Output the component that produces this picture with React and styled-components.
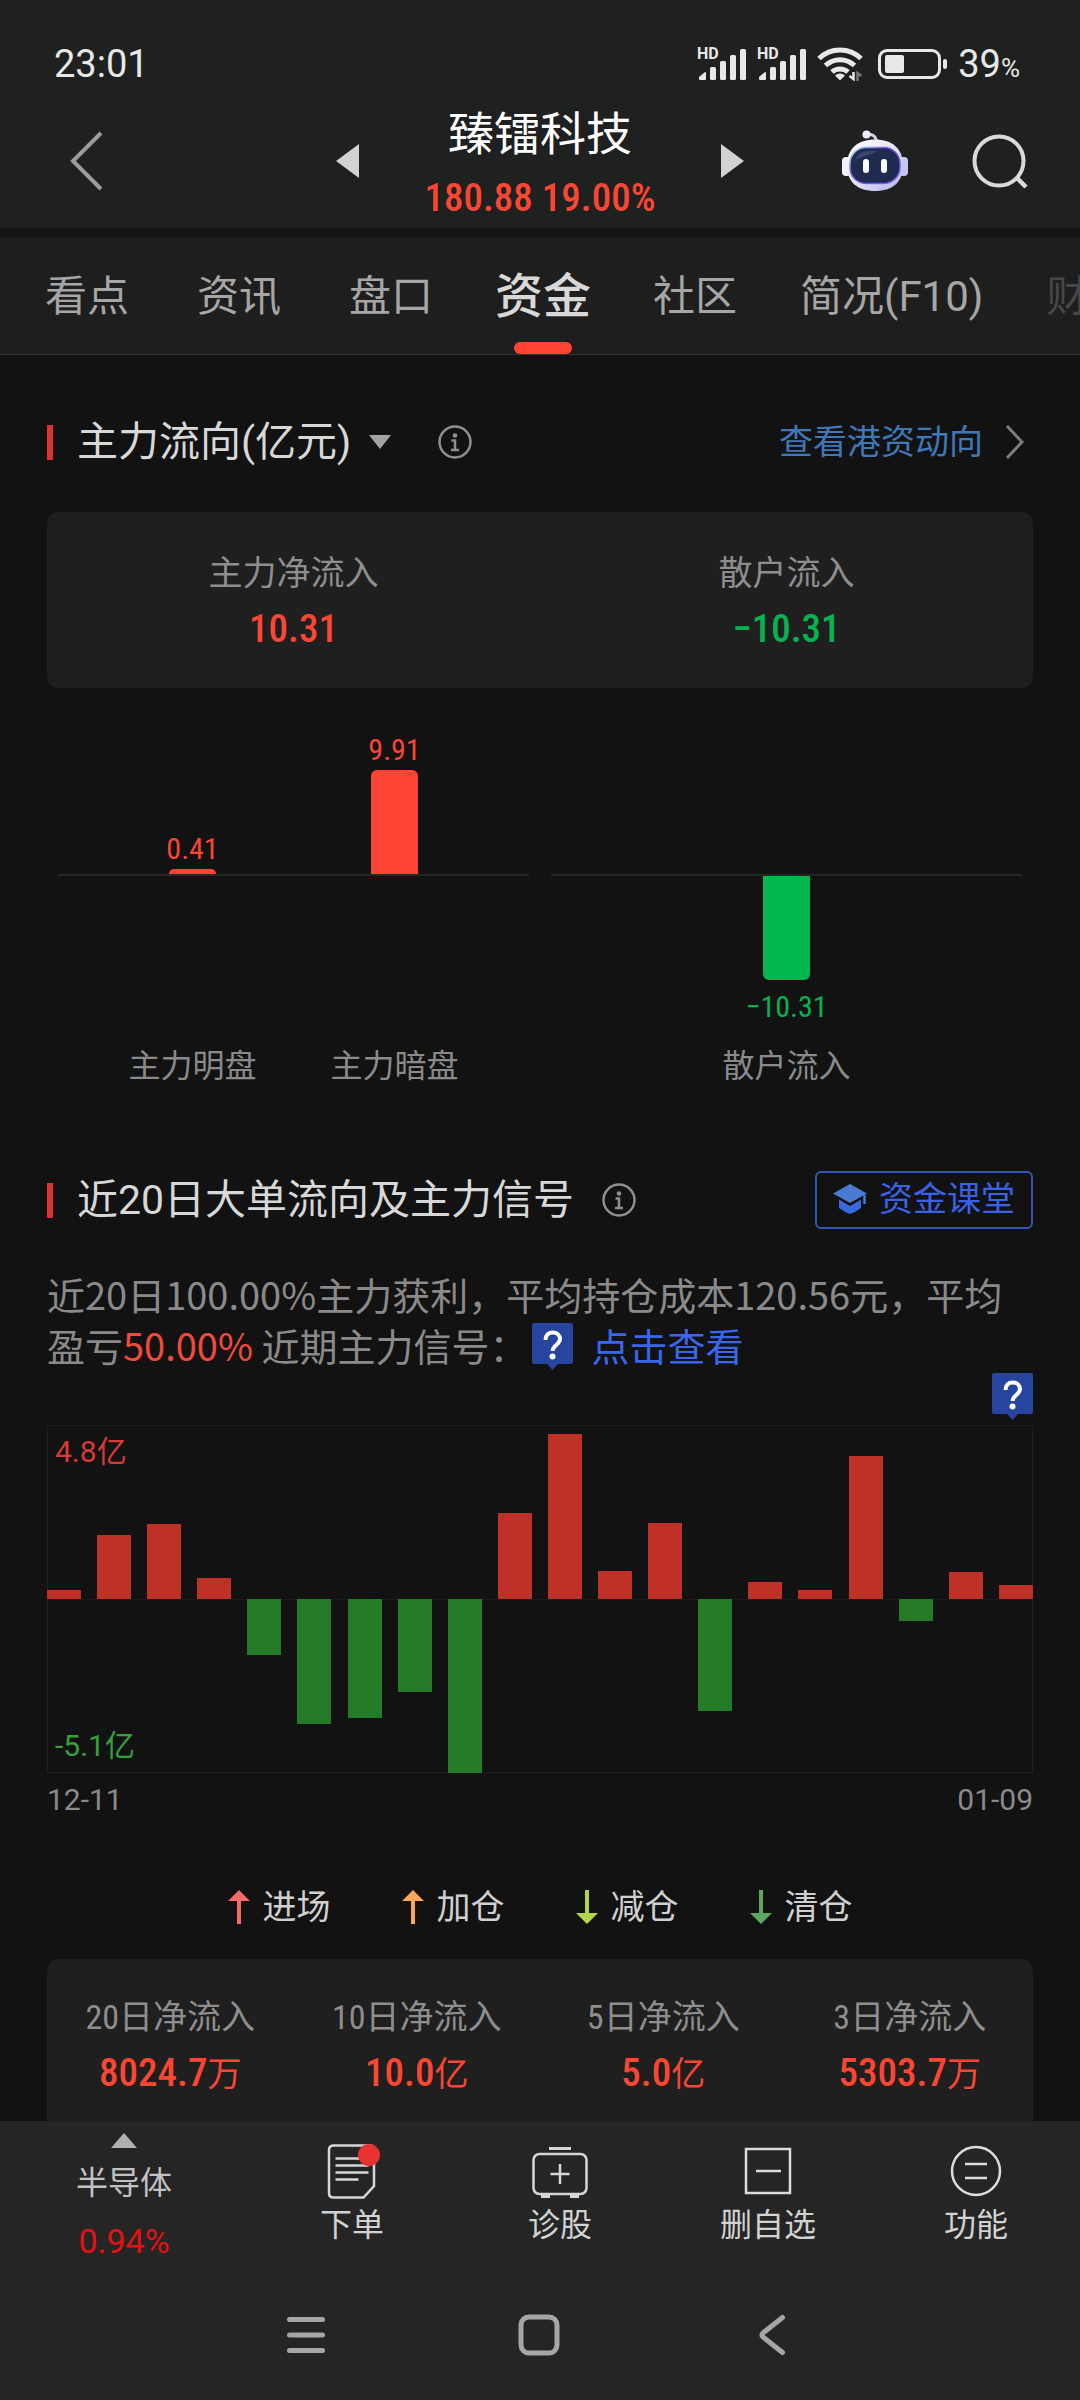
import React from "react";
import styled, { createGlobalStyle } from "styled-components";

const CJK = `"Noto Sans CJK SC", sans-serif`;
const NARROW = `"Roboto Condensed", "Liberation Sans Narrow", Roboto, ${CJK}`;
const RED = "#fa4633";
const GREEN = "#07b350";

const GlobalStyle = createGlobalStyle`
  *, *::before, *::after { box-sizing: border-box; }
  body {
    margin: 0;
    background: #121212;
    color: #d4d4d4;
    font-family: Roboto, ${CJK};
  }
  button { margin: 0; padding: 0; border: 0; background: none; color: inherit; font: inherit; cursor: pointer; }
  h1, h2, p, dl, dd, dt { margin: 0; font-weight: 400; }
  a { text-decoration: none; }
  svg { display: block; flex: none; }
`;

const Screen = styled.div`
  display: flex;
  flex-direction: column;
  height: 100vh;
  overflow: hidden;
`;

/* ---------- top ---------- */

const Top = styled.header`
  flex: none;
  background: #1f2120;
  border-bottom: 9px solid #151515;
`;

const StatusBar = styled.div`
  display: flex;
  align-items: center;
  justify-content: space-between;
  height: 94px;
  padding: 33px 60px 0 54px;
  color: #e8e8e8;
  font-size: 38px;
  line-height: 40px;
`;

const StatusIcons = styled.div`
  display: flex;
  align-items: center;
  gap: 10px;
`;

const Percent = styled.small`
  font-size: 26px;
  line-height: 26px;
`;

const TitleBar = styled.div`
  display: grid;
  grid-template-columns: 1fr auto 1fr;
  align-items: center;
  height: 134px;
  padding: 0 52px;
`;

const BackButton = styled.button`
  justify-self: start;
  margin-left: 18px;
`;

const Stock = styled.div`
  display: flex;
  align-items: center;
  justify-content: space-between;
  width: 408px;
`;

const StockText = styled.div`
  display: flex;
  flex-direction: column;
  align-items: center;
  gap: 13px;
  padding-top: 2px;
`;

const StockName = styled.h1`
  color: #fff;
  font-family: ${CJK};
  font-size: 46px;
  line-height: 58px;
`;

const Num = styled.span`
  font-family: ${NARROW};
  font-size: ${(p) => p.$size || 39}px;
  font-weight: ${(p) => (p.$size ? 400 : 500)};
`;

const Quote = styled.div`
  color: ${RED};
  font-size: 39px;
  line-height: 52px;
  white-space: nowrap;
`;

const Actions = styled.div`
  display: flex;
  align-items: center;
  justify-content: flex-end;
  gap: 64px;
`;

const Tabs = styled.nav`
  display: flex;
  flex: none;
  height: 118px;
  padding-left: 11px;
  overflow: hidden;
  background: #1e1e1e;
  border-bottom: 1px solid #333;
`;

const Tab = styled.button`
  display: flex;
  flex: none;
  flex-direction: column;
  align-items: center;
  justify-content: space-between;
  min-width: 152px;
  padding: 30px 29px 0;
  color: ${(p) => (p.$active ? "#d8d8d8" : "#a6a6a6")};
  font-size: ${(p) => (p.$active ? 48 : 42)}px;
  font-weight: ${(p) => (p.$active ? 500 : 400)};
  line-height: 60px;
  white-space: nowrap;
  opacity: ${(p) => (p.$faded ? 0.3 : 1)};

  ${(p) => p.$active && "padding-left: 0; padding-right: 0;"}

  &::after {
    content: "";
    width: 58px;
    height: 12px;
    border-radius: 6px;
    background: ${(p) => (p.$active ? "#ff4433" : "transparent")};
  }
`;

/* ---------- content ---------- */

const Content = styled.main`
  flex: 1;
  min-height: 0;
  overflow-y: auto;
  scrollbar-width: none;
  padding: 58px 47px 0;
`;

const SectionHead = styled.div`
  display: flex;
  align-items: center;
  height: 58px;
`;

const SectionTitle = styled.h2`
  display: flex;
  align-items: center;
  gap: 24px;
  color: #d8d8d8;
  font-size: 41px;
  line-height: 50px;
  white-space: nowrap;

  &::before {
    content: "";
    width: 6px;
    height: 35px;
    background: #e03131;
  }
`;

const CaretButton = styled.button`
  margin-left: 18px;
`;

const InfoButton = styled.button`
  margin-left: ${(p) => p.$gap}px;
`;

const MoreLink = styled.a`
  display: flex;
  align-items: center;
  gap: 22px;
  margin-left: auto;
  padding-right: 8px;
  color: #3f78b8;
  font-size: 34px;
  line-height: 46px;
`;

const LessonButton = styled.button`
  display: flex;
  align-items: center;
  justify-content: center;
  gap: 12px;
  width: 218px;
  height: 58px;
  margin-left: auto;
  padding-bottom: 2px;
  border: 2px solid #3557b5;
  border-radius: 6px;
  color: #3a62e6;
  font-size: 34px;
  line-height: 46px;
`;

const Card = styled.dl`
  display: grid;
  grid-template-columns: repeat(${(p) => p.$cols}, 1fr);
  margin-top: ${(p) => p.$top}px;
  padding: ${(p) => p.$pad}px 0 35px;
  border-radius: 12px;
  background: #1f1f1f;
`;

const Stat = styled.div`
  display: flex;
  flex-direction: column;
  align-items: center;
  gap: 10px;
  line-height: 46px;
  white-space: nowrap;
`;

const StatLabel = styled.dt`
  color: #8e8e8e;
  font-family: ${NARROW};
  font-size: 34px;
`;

const StatValue = styled.dd`
  color: ${(p) => (p.$down ? GREEN : RED)};
  font-size: 34px;
`;

const FlowChart = styled.div`
  display: grid;
  grid-template-columns: 1fr 1fr;
  gap: 22px;
  padding: 0 11px;
`;

const FlowHalf = styled.div`
  display: flex;
  justify-content: center;
  background: linear-gradient(#262626, #262626) 0 186px / 100% 2px no-repeat;
`;

const FlowColumn = styled.div`
  display: grid;
  grid-template-rows: 186px 172px 40px;
  justify-items: center;
  width: 202px;
`;

const FlowUp = styled.div`
  display: flex;
  flex-direction: column;
  justify-content: flex-end;
  align-items: center;
  gap: 5px;
  color: ${RED};
  line-height: 30px;
`;

const FlowDown = styled.div`
  display: flex;
  flex-direction: column;
  align-items: center;
  gap: 12px;
  padding-top: 2px;
  color: ${GREEN};
  line-height: 30px;
`;

const FlowBar = styled.div`
  width: 47px;
  border-radius: ${(p) => (p.$down ? "0 0 6px 6px" : "6px 6px 0 0")};
  background: ${(p) => (p.$down ? "#02b84f" : "#ff4433")};
`;

const FlowName = styled.div`
  color: #8a8a8a;
  font-size: 32px;
  line-height: 40px;
`;

const SecondHead = styled(SectionHead)`
  margin-top: 85px;
`;

const Summary = styled.p`
  margin-top: 39px;
  color: #8a8a8a;
  font-family: ${CJK};
  font-size: 38px;
  line-height: 51px;
`;

const Hot = styled.span`
  color: #f04a38;
`;

const SignalLink = styled.a`
  color: #3a66ee;

  svg {
    display: inline-block;
    margin: 0 18px 0 5px;
    vertical-align: -9px;
  }
`;

const MarkerRow = styled.div`
  display: flex;
  justify-content: flex-end;
  margin-top: 3px;
`;

const DayChart = styled.div`
  position: relative;
  display: flex;
  justify-content: space-between;
  height: 348px;
  margin-top: 5px;
  background: linear-gradient(#1b1b1b, #1b1b1b) 0 50% / 100% 1px no-repeat;
  box-shadow: inset 0 0 0 1px #1f1f1f, inset 0 -1px 0 #292929;
`;

const Day = styled.div`
  display: flex;
  flex-direction: column;
  justify-content: ${(p) => (p.$down ? "flex-start" : "flex-end")};
  width: 34px;
  height: 50%;
  margin-top: ${(p) => (p.$down ? 174 : 0)}px;
`;

const DayBar = styled.div`
  background: ${(p) => (p.$down ? "#247a26" : "#bd3126")};
`;

const ScaleLabel = styled.span`
  position: absolute;
  left: 8px;
  ${(p) => (p.$low ? "bottom: 8px; color: #38a03a;" : "top: 8px; color: #d83a35;")}
  font-size: 30px;
  line-height: 38px;
`;

const Dates = styled.div`
  display: flex;
  justify-content: space-between;
  margin-top: 7px;
  color: #8a8a8a;
  font-size: 30px;
  line-height: 40px;
`;

const Legend = styled.div`
  display: flex;
  justify-content: center;
  gap: 71px;
  margin-top: 64px;
`;

const LegendItem = styled.span`
  display: flex;
  align-items: center;
  gap: 13px;
  color: #d0d0d0;
  font-size: 34px;
  line-height: 46px;
`;

/* ---------- bottom ---------- */

const Bottom = styled.footer`
  flex: none;
  height: 279px;
  background: #252525;
`;

const Toolbar = styled.nav`
  display: grid;
  grid-template-columns: 248fr 208fr 208fr 208fr 208fr;
  height: 149px;
`;

const Tool = styled.button`
  display: flex;
  flex-direction: column;
  align-items: center;
  gap: 5px;
  padding-top: 21px;
  color: #d2d2d2;
  font-size: 32px;
  line-height: 40px;
`;

const Sector = styled.button`
  display: flex;
  flex-direction: column;
  align-items: center;
  padding-top: 12px;
  color: #c2c2c2;
  font-size: 32px;
  line-height: 40px;
`;

const SectorName = styled.span`
  margin-top: 15px;
`;

const SectorChange = styled.span`
  margin-top: 18px;
  color: #e21212;
  font-size: 34px;
`;

const SystemNav = styled.div`
  display: flex;
  justify-content: center;
  align-items: center;
  height: 130px;
  padding-right: 2px;
`;

const SystemKey = styled.button`
  display: flex;
  justify-content: center;
  width: 233px;
`;

/* ---------- drawings ---------- */

const Signal = () => (
  <svg width="50" height="44" viewBox="0 -5 50 44" fill="#e8e8e8" aria-hidden="true">
    <text x="0" y="12" fontFamily="Roboto, sans-serif" fontSize="16" fontWeight="700">HD</text>
    <path d="M3 33q-1 0-1-1v-2l6-5q1 0 1 1v6q0 1-1 1z" />
    <rect x="13" y="20" width="6" height="13" rx="1.5" />
    <rect x="23" y="14" width="6" height="19" rx="1.5" />
    <rect x="33" y="8" width="6" height="25" rx="1.5" />
    <rect x="43" y="2" width="6" height="31" rx="1.5" />
  </svg>
);

const Wifi = () => (
  <svg width="51" height="36" viewBox="0 0 51 36" fill="none" stroke="#e8e8e8" strokeWidth="5" aria-hidden="true">
    <path d="M2 12.500a30 30 0 0 1 42 0" />
    <path d="M8.500 19.500a21 21 0 0 1 29 0" />
    <path d="M15 26a12 12 0 0 1 16 0" />
    <path d="M18 29.500q5-4 10 0l-5 5z" fill="#e8e8e8" stroke="none" />
    <path d="M36.500 26v7l-4-3" strokeWidth="2.500" />
    <path d="M40.500 35v-8l4 3" stroke="#777" strokeWidth="2.500" />
  </svg>
);

const Battery = () => (
  <svg width="70" height="32" viewBox="0 0 70 32" aria-hidden="true">
    <rect x="1.500" y="2.500" width="60" height="27" rx="7.500" fill="none" stroke="#e8e8e8" strokeWidth="3" />
    <rect x="7" y="7" width="19" height="18" rx="2" fill="#e8e8e8" />
    <rect x="65" y="11" width="4" height="10" rx="2" fill="#e8e8e8" />
  </svg>
);

const BackIcon = () => (
  <svg width="34" height="60" viewBox="0 0 34 60" fill="none" stroke="#9b9b9b" strokeWidth="4">
    <path d="M31 2 3 30l28 28" />
  </svg>
);

const Triangle = ({ d, w, h, fill }) => (
  <svg width={w} height={h} viewBox={`0 0 ${w} ${h}`} fill={fill}>
    <path d={d} />
  </svg>
);

const Robot = () => (
  <svg width="66" height="62" viewBox="0 0 66 62">
    <defs>
      <linearGradient id="shell" x1="0" y1="0" x2="1" y2="1">
        <stop offset="0" stopColor="#ffffff" />
        <stop offset="0.5" stopColor="#e6e2f8" />
        <stop offset="1" stopColor="#b3b1e6" />
      </linearGradient>
      <linearGradient id="rim" x1="0" y1="0" x2="1" y2="1">
        <stop offset="0" stopColor="#8ff0f0" />
        <stop offset="0.4" stopColor="#7a4de0" />
        <stop offset="0.75" stopColor="#5b62ec" />
        <stop offset="1" stopColor="#a45be8" />
      </linearGradient>
    </defs>
    <path d="M25 4q10 0 9 9" fill="none" stroke="#d3cdf2" strokeWidth="3" />
    <circle cx="24.500" cy="4.500" r="4" fill="#efecfd" />
    <rect x="0" y="27" width="9" height="19" rx="4" fill="#f3f1ff" />
    <rect x="57" y="27" width="9" height="19" rx="4" fill="#c9c5ee" />
    <path d="M33 9.500c17 0 28 9 28 26S50 61 33 61 5 52.500 5 35.500s11-26 28-26z" fill="url(#shell)" />
    <rect x="8" y="17.500" width="50" height="36" rx="16" fill="#202b52" stroke="url(#rim)" strokeWidth="1.500" />
    <path d="M13 30q3-9 14-9h9q-8 3-23 9z" fill="#3c4770" />
    <rect x="21" y="29" width="6" height="14" rx="3" fill="#fff" />
    <rect x="39" y="29" width="6" height="14" rx="3" fill="#fff" />
  </svg>
);

const SearchIcon = () => (
  <svg width="56" height="56" viewBox="0 0 56 56" fill="none" stroke="#dadada" strokeWidth="4">
    <circle cx="27" cy="28" r="24.500" />
    <path d="m44 44 10 10" strokeWidth="4.500" />
  </svg>
);

const Info = () => (
  <svg width="34" height="34" viewBox="0 0 34 34" fill="none" stroke="#8f8f8f" strokeWidth="2.500">
    <circle cx="17" cy="17" r="15.500" />
    <circle cx="17" cy="10.500" r="2.300" fill="#8f8f8f" stroke="none" />
    <path d="M13.500 15.500H17v9M13 25h8" />
  </svg>
);

const Chevron = () => (
  <svg width="20" height="36" viewBox="0 0 20 36" fill="none" stroke="#7c7c7c" strokeWidth="3">
    <path d="m2 2 15 16L2 34" />
  </svg>
);

const Cap = () => (
  <svg width="34" height="30" viewBox="0 0 34 30">
    <path d="M17 0 34 9.500 17 19 0 9.500z" fill="#4b7ad2" />
    <path d="M31.500 11v9" stroke="#4b7ad2" strokeWidth="2.500" />
    <path d="M6 15.500 17 22l11-6.500V24q-5 4-11 6-6-2-11-6z" fill="#3a68de" />
  </svg>
);

const Marker = () => (
  <svg width="41" height="47" viewBox="0 0 41 47" role="img" aria-label="?">
    <path d="M2 0h37q2 0 2 2v37q0 2-2 2H26l-5.500 6L15 41H2q-2 0-2-2V2q0-2 2-2z" fill="#27449f" />
    <path d="M13.500 17c0-5 3-7.500 7.200-7.500 4.500 0 7.300 2.800 7.300 6.500 0 5.500-7.300 6-7.300 12" fill="none" stroke="#fff" strokeWidth="4" />
    <circle cx="20.500" cy="33.500" r="3" fill="#fff" />
  </svg>
);

const Arrow = ({ color, down }) => (
  <svg width="22" height="34" viewBox="0 0 22 34" fill={color}>
    {down ? <path d="M9 0h4v23h9L11 34 0 23h9z" /> : <path d="M9 34h4V11h9L11 0 0 11h9z" />}
  </svg>
);

const OrderIcon = () => (
  <svg width="56" height="58" viewBox="0 0 56 58" fill="none" stroke="#d6d6d6" strokeWidth="2.500">
    <path d="M9.500 3.500H46q4 0 4 4V44L39.500 55.500h-30Q5 55.500 5 51V8q0-4.500 4.500-4.500z" />
    <path d="M11.500 16.500h33M11.500 23.500h33M11.500 30.500h33M11.500 37.500h23" />
    <circle cx="45" cy="13" r="11" fill="#e83232" stroke="none" />
  </svg>
);

const DiagnoseIcon = () => (
  <svg width="56" height="58" viewBox="0 0 56 58" fill="none" stroke="#d6d6d6" strokeWidth="2.500">
    <path d="M17 6.500h22" strokeWidth="3" />
    <rect x="1.500" y="12" width="53" height="40" rx="6" />
    <path d="M28 22v20M18.500 32h19" />
    <path d="M9 54h9M38 54h9" strokeWidth="4" />
  </svg>
);

const RemoveIcon = () => (
  <svg width="56" height="58" viewBox="0 0 56 58" fill="none" stroke="#dcdcdc" strokeWidth="2.500">
    <rect x="6" y="7" width="44" height="44" />
    <path d="M16 29h25" />
  </svg>
);

const MoreIcon = () => (
  <svg width="56" height="58" viewBox="0 0 56 58" fill="none" stroke="#dcdcdc" strokeWidth="2.500">
    <circle cx="28" cy="29" r="24" />
    <path d="M17 22h22M17 36h22" />
  </svg>
);

/* ---------- data ---------- */

const TABS = ["看点", "资讯", "盘口", "资金", "社区", "简况(F10)", "财务"];

const DAYS = [
  0.26, 1.88, 2.2, 0.62, -1.64, -3.67, -3.49, -2.73, -5.1, 2.52,
  4.84, 0.82, 2.23, -3.28, 0.5, 0.26, 4.19, -0.64, 0.79, 0.41,
];
const DAY_MAX = 5.1;

const LEGEND = [
  ["进场", "#f46b68", false],
  ["加仓", "#ffa65a", false],
  ["减仓", "#b3d54c", true],
  ["清仓", "#5da75f", true],
];

const NET = [
  ["20日净流入", "8024.7", "万"],
  ["10日净流入", "10.0", "亿"],
  ["5日净流入", "5.0", "亿"],
  ["3日净流入", "5303.7", "万"],
];

const TOOLS = [
  ["下单", OrderIcon],
  ["诊股", DiagnoseIcon],
  ["删自选", RemoveIcon],
  ["功能", MoreIcon],
];

function Flow({ name, label, height, down }) {
  const bar = <FlowBar $down={down} style={{ height }} />;
  return (
    <FlowColumn>
      <FlowUp>{!down && (<><Num $size={30}>{label}</Num>{bar}</>)}</FlowUp>
      <FlowDown>{down && (<>{bar}<Num $size={30}>{label}</Num></>)}</FlowDown>
      <FlowName>{name}</FlowName>
    </FlowColumn>
  );
}

export default function App() {
  return (
    <Screen>
      <GlobalStyle />
      <Top>
        <StatusBar>
          <span>23:01</span>
          <StatusIcons>
            <Signal />
            <Signal />
            <Wifi />
            <Battery />
            <span>39<Percent>%</Percent></span>
          </StatusIcons>
        </StatusBar>
        <TitleBar>
          <BackButton aria-label="返回"><BackIcon /></BackButton>
          <Stock>
            <button aria-label="上一只"><Triangle w={23} h={34} d="M23 0v34L0 17z" fill="#d2d2d2" /></button>
            <StockText>
              <StockName>臻镭科技</StockName>
              <Quote><Num>180.88 19.00%</Num></Quote>
            </StockText>
            <button aria-label="下一只"><Triangle w={23} h={34} d="M0 0v34l23-17z" fill="#d2d2d2" /></button>
          </Stock>
          <Actions>
            <button aria-label="智能助手"><Robot /></button>
            <button aria-label="搜索"><SearchIcon /></button>
          </Actions>
        </TitleBar>
      </Top>
      <Tabs>
        {TABS.map((t) => (
          <Tab key={t} $active={t === "资金"} $faded={t === "财务"}>{t}</Tab>
        ))}
      </Tabs>

      <Content>
        <SectionHead>
          <SectionTitle>主力流向(亿元)</SectionTitle>
          <CaretButton aria-label="切换"><Triangle w={22} h={14} d="M0 0h22L11 14z" fill="#a3a3a3" /></CaretButton>
          <InfoButton $gap={47} aria-label="说明"><Info /></InfoButton>
          <MoreLink href="#hk">查看港资动向<Chevron /></MoreLink>
        </SectionHead>

        <Card $cols={2} $top={41} $pad={38}>
          <Stat>
            <StatLabel>主力净流入</StatLabel>
            <StatValue><Num>10.31</Num></StatValue>
          </Stat>
          <Stat>
            <StatLabel>散户流入</StatLabel>
            <StatValue $down><Num>−10.31</Num></StatValue>
          </Stat>
        </Card>

        <FlowChart>
          <FlowHalf>
            <Flow name="主力明盘" label="0.41" height={5} />
            <Flow name="主力暗盘" label="9.91" height={104} />
          </FlowHalf>
          <FlowHalf>
            <Flow name="散户流入" label="−10.31" height={104} down />
          </FlowHalf>
        </FlowChart>

        <SecondHead>
          <SectionTitle>近20日大单流向及主力信号</SectionTitle>
          <InfoButton $gap={28} aria-label="说明"><Info /></InfoButton>
          <LessonButton><Cap />资金课堂</LessonButton>
        </SecondHead>

        <Summary>
          近20日100.00%主力获利，平均持仓成本120.56元，平均盈亏<Hot>50.00%</Hot> 近期主力信号：
          <SignalLink href="#signal"><Marker />点击查看</SignalLink>
        </Summary>

        <MarkerRow><Marker /></MarkerRow>
        <DayChart>
          {DAYS.map((v, i) => (
            <Day key={i} $down={v < 0}>
              <DayBar $down={v < 0} style={{ height: `${(Math.abs(v) / DAY_MAX) * 100}%` }} />
            </Day>
          ))}
          <ScaleLabel>4.8亿</ScaleLabel>
          <ScaleLabel $low>-5.1亿</ScaleLabel>
        </DayChart>
        <Dates><span>12-11</span><span>01-09</span></Dates>

        <Legend>
          {LEGEND.map(([name, color, down]) => (
            <LegendItem key={name}><Arrow color={color} down={down} />{name}</LegendItem>
          ))}
        </Legend>

        <Card $cols={4} $top={29} $pad={35}>
          {NET.map(([name, value, unit]) => (
            <Stat key={name}>
              <StatLabel>{name}</StatLabel>
              <StatValue><Num>{value}</Num>{unit}</StatValue>
            </Stat>
          ))}
        </Card>
      </Content>

      <Bottom>
        <Toolbar>
          <Sector>
            <Triangle w={26} h={15} d="M13 0l13 15H0z" fill="#b0b0b0" />
            <SectorName>半导体</SectorName>
            <SectorChange>0.94%</SectorChange>
          </Sector>
          {TOOLS.map(([name, Icon]) => (
            <Tool key={name}><Icon />{name}</Tool>
          ))}
        </Toolbar>
        <SystemNav>
          <SystemKey aria-label="菜单">
            <svg width="40" height="42" viewBox="0 0 40 42" stroke="#a6a6a6" strokeWidth="5" strokeLinecap="round">
              <path d="M3.500 5.500h33M3.500 21h33M3.500 36.500h33" />
            </svg>
          </SystemKey>
          <SystemKey aria-label="主页">
            <svg width="42" height="42" viewBox="0 0 42 42" fill="none" stroke="#a6a6a6" strokeWidth="5">
              <rect x="3" y="3" width="36" height="36" rx="8" />
            </svg>
          </SystemKey>
          <SystemKey aria-label="后退">
            <svg width="28" height="42" viewBox="0 0 28 42" fill="none" stroke="#a6a6a6" strokeWidth="5" strokeLinecap="round" strokeLinejoin="round">
              <path d="M24.500 3.500 5 19q-2 2 0 4l19.500 15.500" />
            </svg>
          </SystemKey>
        </SystemNav>
      </Bottom>
    </Screen>
  );
}
